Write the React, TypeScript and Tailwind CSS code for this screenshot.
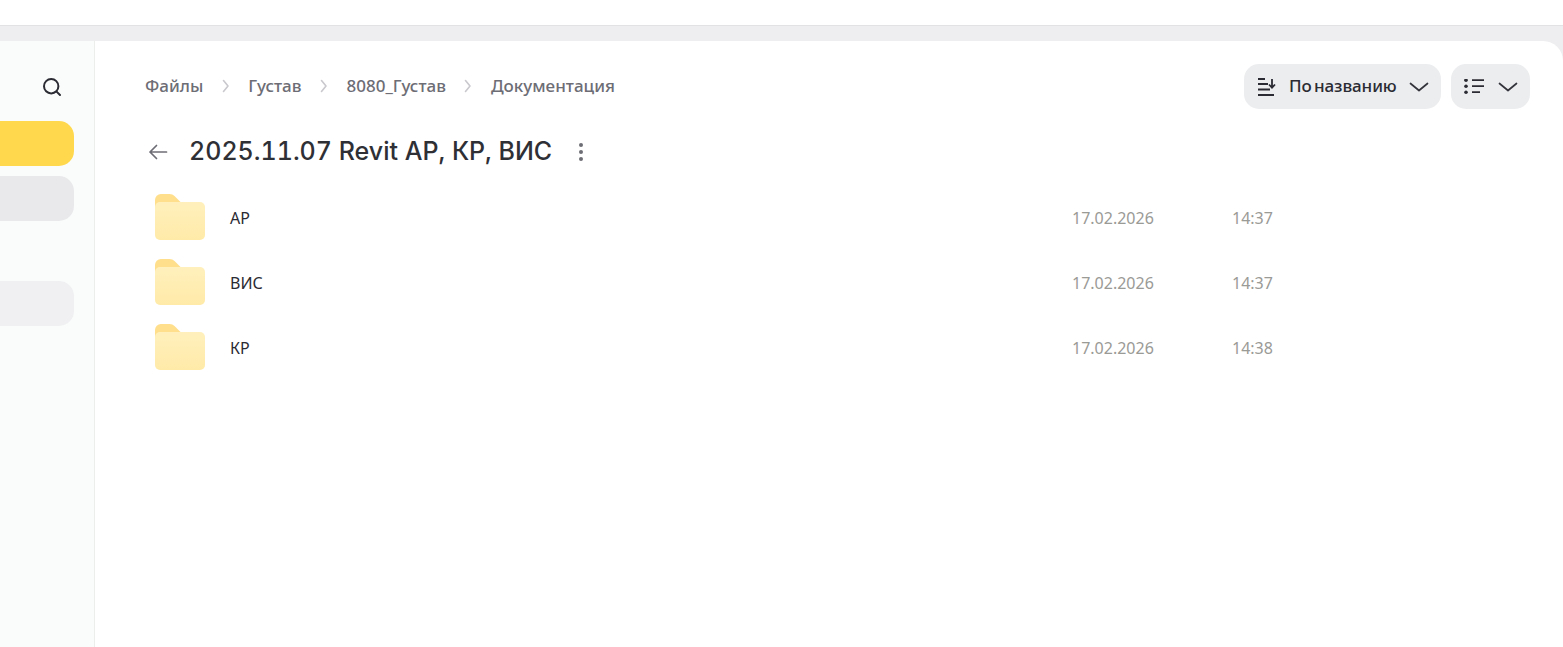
import React from 'react';

const folders = [
  { name: 'АР', date: '17.02.2026', time: '14:37' },
  { name: 'ВИС', date: '17.02.2026', time: '14:37' },
  { name: 'КР', date: '17.02.2026', time: '14:38' },
];

const crumbs = ['Файлы', 'Густав', '8080_Густав', 'Документация'];

const Chevron = ({ className }: { className?: string }) => (
  <svg width="20" height="10" viewBox="0 0 20 10" fill="none" className={className}>
    <path d="M1.500 1.500 10 8.500 18.500 1.500" stroke="#34343c" strokeWidth="1.700" strokeLinecap="round" strokeLinejoin="round" />
  </svg>
);

const Crumb = () => (
  <svg width="8" height="14" viewBox="0 0 8 14" fill="none">
    <path d="M1.500 1.500 6 7l-4.500 5.500" stroke="#c9c9ce" strokeWidth="1.600" strokeLinecap="round" strokeLinejoin="round" />
  </svg>
);

const Folder = () => (
  <svg width="50" height="46" viewBox="0 0 50 46" className="shrink-0">
    <defs>
      <linearGradient id="folderBody" x1="0" y1="0" x2="0" y2="1">
        <stop offset="0" stopColor="#fff0bc" />
        <stop offset="1" stopColor="#ffeaa8" />
      </linearGradient>
    </defs>
    <path d="M0 6a6 6 0 0 1 6-6h8.500c2.200 0 3.600.8 5 2l7 7v8H0z" fill="#ffdf8c" />
    <rect x="0" y="8" width="50" height="38" rx="5" fill="url(#folderBody)" />
  </svg>
);

export default function App() {
  return (
    <div className="flex h-[647px] w-[1563px] flex-col overflow-hidden bg-white font-['Noto_Sans',sans-serif]">
      {/* top bar */}
      <div className="h-[26px] shrink-0 border-b border-[#e2e2e4] bg-white" />

      <div className="flex min-h-0 flex-1 flex-col bg-[#eeeef0] pt-[15px]">
        <div className="flex min-h-0 flex-1 overflow-hidden rounded-tr-[20px] bg-white">
          {/* sidebar, cut off on the left */}
          <div className="flex w-[95px] shrink-0 flex-col border-r border-[#eceeec] bg-[#fafcfb] pr-[20px]">
            <div className="flex h-[80px] shrink-0 items-start justify-end pt-[36px] pr-[12px]">
              <svg width="20" height="20" viewBox="0 0 20 20" fill="none">
                <circle cx="9.200" cy="9.200" r="7.200" stroke="#2b2b33" strokeWidth="2" />
                <path d="M14.600 14.600 18 18" stroke="#2b2b33" strokeWidth="2" strokeLinecap="round" />
              </svg>
            </div>
            <div className="h-[45px] rounded-r-[15px] bg-[#ffd84d]" />
            <div className="mt-[10px] h-[45px] rounded-r-[15px] bg-[#e9e9eb]" />
            <div className="mt-[60px] h-[45px] rounded-r-[15px] bg-[#f0f0f2]" />
          </div>

          {/* content */}
          <div className="min-w-0 flex-1 pl-[50px] pr-[33px]">
            <div className="flex h-[68px] items-end justify-between">
              <div className="flex h-[45px] items-center gap-[18.5px] pb-[1px] text-[17px] font-medium text-[#6d6d75]">
                {crumbs.map((c, i) => (
                  <React.Fragment key={c}>
                    {i > 0 && <Crumb />}
                    <span>{c}</span>
                  </React.Fragment>
                ))}
              </div>
              <div className="flex items-center gap-[10px]">
                <button className="flex h-[45px] w-[197px] items-center rounded-[15px] bg-[#ecedef] pl-[13px] text-[17px] font-medium tracking-[-0.1px] text-[#2b2b33] [word-spacing:-2px]">
                  <svg width="20" height="20" viewBox="0 0 20 20" fill="none" className="shrink-0">
                    <path d="M1 2h7M1 7h10M1 12.500h12M1 18h16" stroke="#2b2b33" strokeWidth="1.800" />
                    <path d="M15 2v8.500M12 7.500l3 3.200 3-3.200" stroke="#2b2b33" strokeWidth="1.800" />
                  </svg>
                  <span className="ml-[12px] whitespace-nowrap pb-[1px]">По названию</span>
                  <Chevron className="ml-[12px]" />
                </button>
                <button className="flex h-[45px] w-[79px] items-center rounded-[15px] bg-[#ecedef] pl-[13px]">
                  <svg width="20" height="16" viewBox="0 0 20 16" fill="none" className="shrink-0">
                    <circle cx="2" cy="1.200" r="1.800" fill="#2b2b33" />
                    <circle cx="2" cy="7.200" r="1.800" fill="#2b2b33" />
                    <circle cx="2" cy="13.200" r="1.800" fill="#2b2b33" />
                    <path d="M8 1.200h12M8 7.200h12M8 13.200h8" stroke="#2b2b33" strokeWidth="1.800" />
                  </svg>
                  <Chevron className="ml-[14px]" />
                </button>
              </div>
            </div>

            <div className="mt-[20px] flex h-[45px] items-center">
              <svg width="20" height="16" viewBox="0 0 20 16" fill="none" className="ml-[3px] shrink-0">
                <path d="M18.500 8H2M8.500 1.500 2 8l6.500 6.500" stroke="#6d6d75" strokeWidth="1.700" strokeLinecap="round" strokeLinejoin="round" />
              </svg>
              <h1 className="ml-[21px] whitespace-nowrap font-['Inter',sans-serif] text-[25px] font-medium tabular-nums text-[#2f2f36]">2025.11.07 Revit АР, КР, ВИС</h1>
              <svg width="6" height="20" viewBox="0 0 6 20" className="ml-[26px]">
                <circle cx="3" cy="3" r="2" fill="#6d6d75" />
                <circle cx="3" cy="10" r="2" fill="#6d6d75" />
                <circle cx="3" cy="17" r="2" fill="#6d6d75" />
              </svg>
            </div>

            <div className="mt-[10px] flex flex-col">
              {folders.map((f) => (
                <div key={f.name} className="flex h-[65px] items-center pl-[10px] text-[16px]">
                  <Folder />
                  <span className="ml-[25px] w-[842px] pt-[2px] text-[#2b2b33]">{f.name}</span>
                  <span className="w-[160px] pt-[2px] text-[#9a9a96]">{f.date}</span>
                  <span className="pt-[2px] text-[#9a9a96]">{f.time}</span>
                </div>
              ))}
            </div>
          </div>
        </div>
      </div>
    </div>
  );
}
